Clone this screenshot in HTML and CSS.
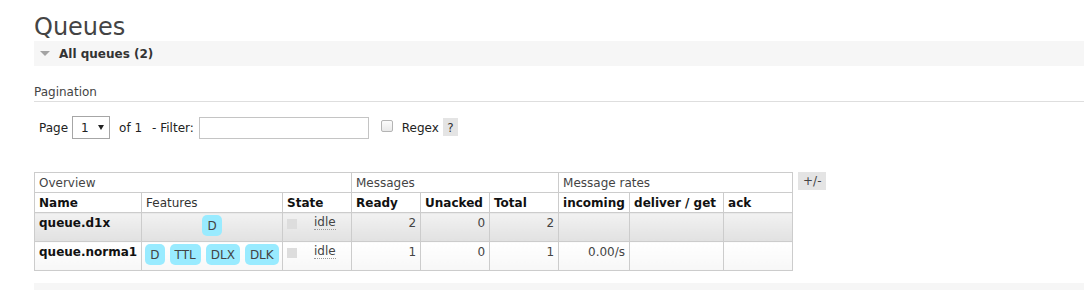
FILE: index.html
```html
<!DOCTYPE html>
<html lang="en">
<head>
<meta charset="utf-8">
<title>Queues</title>
<link rel="stylesheet" href="styles.css">
</head>
<body>
<div class="main">
  <h1 class="page-title">Queues</h1>
  <div class="section">
    <h2 class="section-title">
      <svg class="tri" width="10" height="5" viewBox="0 0 10 5"><polygon points="0,0 10,0 5,5" fill="#a3a3a3"/></svg>
      All queues (2)
    </h2>
    <div class="section-body">
      <h3 class="sub-title">Pagination</h3>
      <div class="pagination">
        <span class="lbl">Page</span>
        <span class="select-wrap"><select class="page-select"><option>1</option></select></span>
        <span class="lbl of">of 1</span>
        <span class="lbl filter">- Filter:</span>
        <input class="filter-input" type="text">
        <input class="regex-check" type="checkbox">
        <span class="lbl regex">Regex</span>
        <span class="help">?</span>
      </div>
      <div class="table-wrap">
        <table class="list">
          <colgroup>
            <col class="c-name"><col class="c-feat"><col class="c-std"><col class="c-std"><col class="c-std"><col class="c-std"><col class="c-inc"><col class="c-del"><col class="c-std">
          </colgroup>
          <thead>
            <tr class="group-row">
              <th colspan="3">Overview</th>
              <th colspan="3">Messages</th>
              <th colspan="3">Message rates</th>
            </tr>
            <tr class="head-row">
              <th>Name</th>
              <th class="plain">Features</th>
              <th>State</th>
              <th>Ready</th>
              <th>Unacked</th>
              <th>Total</th>
              <th>incoming</th>
              <th>deliver / get</th>
              <th>ack</th>
            </tr>
          </thead>
          <tbody>
            <tr class="alt1">
              <td class="name">queue.d1x</td>
              <td class="feat"><div class="badges"><abbr class="type">D</abbr></div></td>
              <td class="state"><span class="status"></span><abbr class="st">idle</abbr></td>
              <td class="num">2</td>
              <td class="num">0</td>
              <td class="num">2</td>
              <td class="num"></td>
              <td class="num"></td>
              <td class="num"></td>
            </tr>
            <tr class="alt2">
              <td class="name">queue.norma1</td>
              <td class="feat"><div class="badges"><abbr class="type">D</abbr><abbr class="type">TTL</abbr><abbr class="type">DLX</abbr><abbr class="type">DLK</abbr></div></td>
              <td class="state"><span class="status"></span><abbr class="st">idle</abbr></td>
              <td class="num">1</td>
              <td class="num">0</td>
              <td class="num">1</td>
              <td class="num">0.00/s</td>
              <td class="num"></td>
              <td class="num"></td>
            </tr>
          </tbody>
        </table>
        <span class="plusminus">+/-</span>
      </div>
    </div>
  </div>
  <div class="section-bar"></div>
</div>
</body>
</html>
```
FILE: styles.css
```css
html, body {
  margin: 0;
  padding: 0;
  background: #fff;
}

body {
  font-family: "DejaVu Sans", Verdana, sans-serif;
  font-size: 12px;
  line-height: 14px;
  color: #444;
  overflow: hidden;
}

.main {
  padding-left: 34px;
}

.page-title {
  font-size: 24px;
  font-weight: normal;
  line-height: 27px;
  margin: 14px 0 0;
  color: #444;
}

.section-title {
  display: flex;
  align-items: center;
  height: 25px;
  margin: 0;
  padding-left: 6px;
  background: #f6f6f6;
  font-size: 12px;
  font-weight: bold;
  color: #333;
}

.section-bar {
  height: 25px;
  margin-top: 12px;
  background: #f6f6f6;
}

.tri {
  margin-right: 9px;
  flex: none;
}

.sub-title {
  margin: 19px 0 0;
  padding-bottom: 2px;
  border-bottom: 1px solid #dedede;
  font-size: 12px;
  font-weight: normal;
  line-height: 14px;
  color: #444;
}

.pagination {
  display: flex;
  align-items: baseline;
  margin-top: 14px;
  padding-left: 5px;
}

.lbl {
  color: #222;
}

.select-wrap {
  position: relative;
  margin-left: 4px;
}

.select-wrap::after {
  content: "";
  position: absolute;
  left: 26px;
  top: 9px;
  border-left: 3px solid transparent;
  border-right: 3px solid transparent;
  border-top: 5px solid #222;
  pointer-events: none;
}

.page-select {
  -webkit-appearance: none;
  appearance: none;
  box-sizing: border-box;
  width: 38px;
  height: 23px;
  margin: 0;
  padding: 0 0 0 8px;
  border: 1px solid #a6a6a6;
  border-radius: 0;
  background: #fff;
  font-family: inherit;
  font-size: 12px;
  color: #222;
}

.of {
  margin-left: 9px;
}

.filter {
  margin-left: 10px;
}

.filter-input {
  box-sizing: border-box;
  width: 170px;
  height: 22px;
  margin: 0 0 0 5px;
  padding: 0 4px;
  border: 1px solid #c4c4c4;
  font-family: inherit;
  font-size: 12px;
}

.regex-check {
  -webkit-appearance: none;
  appearance: none;
  align-self: flex-start;
  box-sizing: border-box;
  width: 12px;
  height: 12px;
  margin: 4px 9px 0 12px;
  border: 1px solid #b4b4b4;
  border-radius: 2px;
  background: linear-gradient(#fbfbfb, #e9e9e9);
}

.help {
  box-sizing: border-box;
  width: 15px;
  margin-left: 4px;
  padding: 3px 0 1px;
  background: #e4e4e4;
  text-align: center;
  color: #333;
}

.table-wrap {
  display: flex;
  align-items: flex-start;
  margin-top: 33px;
}

.list {
  border-collapse: collapse;
  table-layout: fixed;
  width: 759px;
}

.c-name { width: 107px; }
.c-feat { width: 141px; }
.c-std { width: 69px; }
.c-inc { width: 71px; }
.c-del { width: 94px; }

.list th,
.list td {
  border: 1px solid #cccccc;
  padding: 3px 4px 2px;
  text-align: left;
  vertical-align: top;
  white-space: nowrap;
  overflow: hidden;
}

.group-row th {
  font-weight: normal;
  color: #444;
}

.head-row th {
  font-weight: bold;
  color: #111;
}

.head-row th.plain {
  font-weight: normal;
  color: #333;
}

.alt1 td {
  background: linear-gradient(#f2f2f2, #e1e1e1);
}

.alt2 td {
  background: linear-gradient(#ffffff, #f7f7f7);
}

.list td {
  padding: 3px 4px;
  color: #444;
}

.list td.name {
  font-weight: bold;
  color: #111;
}

.list td.num {
  text-align: right;
}

.list td.feat {
  padding: 2px 4px 5px;
}

.badges {
  display: flex;
  justify-content: center;
  gap: 5px;
}

.type {
  display: block;
  padding: 4px 5px 3px;
  line-height: 14px;
  background: #99ebff;
  border-radius: 5px;
  color: #444;
  text-decoration: none;
}

.status {
  display: inline-block;
  width: 10px;
  height: 10px;
  margin-top: 3px;
  vertical-align: top;
  background: #dddddd;
}

.st {
  display: inline-block;
  margin-left: 17px;
  vertical-align: top;
  text-decoration: none;
  border-bottom: 1px dotted #999;
  line-height: 13px;
}

.plusminus {
  box-sizing: border-box;
  height: 18px;
  margin-left: 5px;
  padding: 2px 5px 0;
  background: #e4e4e4;
  color: #444;
}
```
